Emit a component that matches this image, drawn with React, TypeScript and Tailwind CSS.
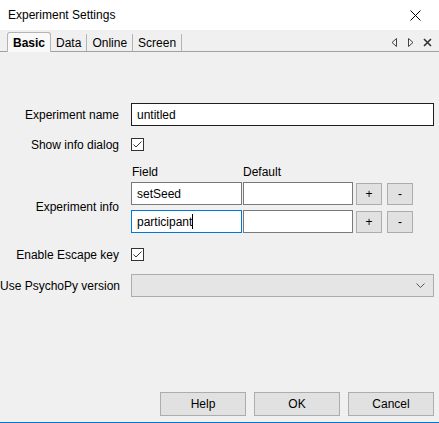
import React from 'react';

const font = { fontFamily: '"Liberation Sans", Arial, sans-serif' };

function Check() {
  return (
    <div className="w-[13px] h-[13px] border border-[#333] bg-white flex items-center justify-center">
      <svg width="11" height="11" viewBox="0 0 11 11" fill="none">
        <path d="M1.5 5.5 L4 8 L9.5 2.5" stroke="#333" strokeWidth="1" />
      </svg>
    </div>
  );
}

function Label({ children }: { children: React.ReactNode }) {
  return <div className="w-[120px] shrink-0 text-right whitespace-nowrap pr-[1px]">{children}</div>;
}

function SmallBtn({ children }: { children: React.ReactNode }) {
  return (
    <div className="w-[26px] h-[22px] border border-[#adadad] bg-[#e1e1e1] flex items-center justify-center text-[12px] leading-none">
      {children}
    </div>
  );
}

function DlgBtn({ children }: { children: React.ReactNode }) {
  return (
    <div className="w-[86px] h-[24px] border border-[#adadad] bg-[#e1e1e1] flex items-center justify-center">
      {children}
    </div>
  );
}

export default function App() {
  return (
    <div className="w-[439px] h-[423px] bg-[#f0f0f0] text-[12px] text-black flex flex-col overflow-hidden relative" style={font}>
      <div className="h-[30px] bg-white flex items-center justify-between pl-[8px] pr-[18px]">
        <span>Experiment Settings</span>
        <svg width="11" height="11" viewBox="0 0 11 11">
          <path d="M0.5 0.5 L10.5 10.5 M10.5 0.5 L0.5 10.5" stroke="#000" strokeWidth="1" />
        </svg>
      </div>

      <div className="flex items-end h-[22px] pl-[2px] pr-[2px] border-b border-[#a0a0a0] relative whitespace-nowrap">
        <div className="w-[5px]" />
        <div className="px-[5px] border border-b-0 border-[#b4b4b4] rounded-t-[3px] bg-[#f9f9f9] font-bold flex items-center -mb-[1px] h-[20px]">
          Basic
        </div>
        <div className="h-[17px] px-[5px] border-r border-[#b4b4b4] flex items-center">Data</div>
        <div className="h-[17px] px-[5px] border-r border-[#b4b4b4] flex items-center">Online</div>
        <div className="h-[17px] px-[5px] border-r border-[#b4b4b4] flex items-center">Screen</div>
        <div className="flex-1" />
        <div className="flex items-center gap-[9px] h-[17px] pr-[5px] text-[#333]">
          <svg width="7" height="9" viewBox="0 0 7 9"><path d="M5.5 0.5 L1 4.5 L5.5 8.5 Z" fill="none" stroke="#444" /></svg>
          <svg width="7" height="9" viewBox="0 0 7 9"><path d="M1.5 0.5 L6 4.5 L1.5 8.5 Z" fill="none" stroke="#444" /></svg>
          <svg width="9" height="9" viewBox="0 0 9 9"><path d="M1 1 L8 8 M8 1 L1 8" stroke="#333" strokeWidth="1.6" /></svg>
        </div>
      </div>

      <div className="flex flex-col pt-[51px]">
        <div className="flex items-center gap-[11px] h-[23px]">
          <Label>Experiment name</Label>
          <div className="w-[303px] h-[23px] border border-[#1e1e1e] bg-white flex items-center pl-[5px]">untitled</div>
        </div>

        <div className="flex items-center gap-[11px] mt-[12px] h-[13px]">
          <Label>Show info dialog</Label>
          <Check />
        </div>

        <div className="flex gap-[11px] mt-[13px]">
          <div className="w-[120px] shrink-0 flex items-center justify-end pt-[16px] pr-[1px] whitespace-nowrap">Experiment info</div>
          <div className="flex flex-col">
            <div className="flex h-[17px] leading-[17px]">
              <div className="w-[112px] pl-[1px]">Field</div>
              <div>Default</div>
            </div>
            <div className="flex items-center mt-[1px]">
              <div className="w-[111px] h-[23px] border border-[#7a7a7a] bg-white flex items-center pl-[5px]">setSeed</div>
              <div className="w-[110px] h-[23px] ml-[1px] border border-[#7a7a7a] bg-white" />
              <div className="ml-[3px] mt-[1px]"><SmallBtn>+</SmallBtn></div>
              <div className="ml-[5px] mt-[1px]"><SmallBtn>-</SmallBtn></div>
            </div>
            <div className="flex items-center mt-[5px]">
              <div className="w-[111px] h-[23px] border border-[#0078d7] bg-white flex items-center pl-[5px]">
                participant<span className="inline-block w-px h-[15px] bg-black" />
              </div>
              <div className="w-[110px] h-[23px] ml-[1px] border border-[#7a7a7a] bg-white" />
              <div className="ml-[3px] mt-[1px]"><SmallBtn>+</SmallBtn></div>
              <div className="ml-[5px] mt-[1px]"><SmallBtn>-</SmallBtn></div>
            </div>
          </div>
        </div>

        <div className="flex items-center gap-[11px] mt-[15px] h-[13px]">
          <Label>Enable Escape key</Label>
          <Check />
        </div>

        <div className="flex items-center gap-[11px] mt-[13px] h-[23px]">
          <Label>Use PsychoPy version</Label>
          <div className="w-[303px] h-[23px] border border-[#adadad] bg-[#e5e5e5] flex items-center justify-end pr-[8px]">
            <svg width="9" height="5" viewBox="0 0 9 5"><path d="M0.5 0.5 L4.5 4.5 L8.5 0.5" fill="none" stroke="#555" /></svg>
          </div>
        </div>
      </div>

      <div className="flex-1" />
      <div className="flex justify-end gap-[8px] pr-[5px] pb-[6px]">
        <DlgBtn>Help</DlgBtn>
        <DlgBtn>OK</DlgBtn>
        <DlgBtn>Cancel</DlgBtn>
      </div>
      <div className="h-px bg-[#0078d7]" />
    </div>
  );
}
